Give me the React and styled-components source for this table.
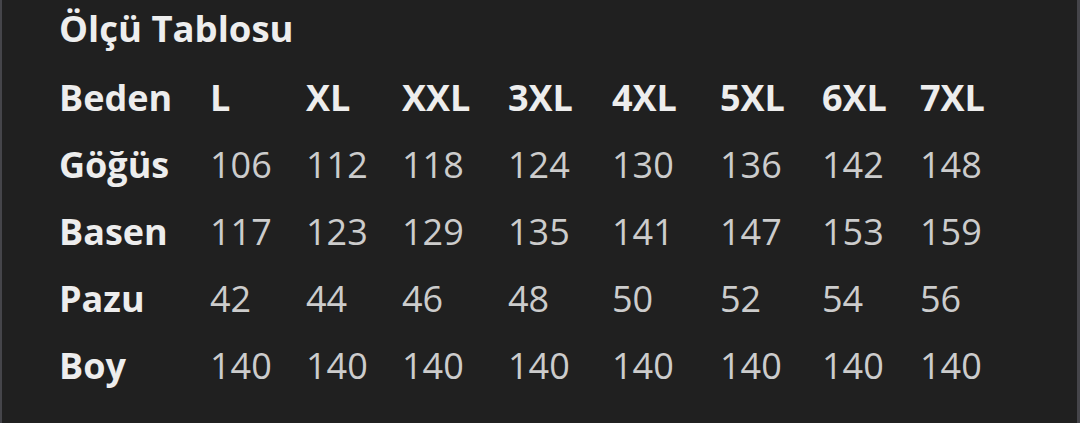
import styled, { createGlobalStyle } from "styled-components";

const GlobalStyle = createGlobalStyle`
  html, body {
    margin: 0;
    padding: 0;
    background: #202020;
  }
`;

const sizes = ["L", "XL", "XXL", "3XL", "4XL", "5XL", "6XL", "7XL"];

const rows = [
  { name: "Göğüs", values: [106, 112, 118, 124, 130, 136, 142, 148] },
  { name: "Basen", values: [117, 123, 129, 135, 141, 147, 153, 159] },
  { name: "Pazu", values: [42, 44, 46, 48, 50, 52, 54, 56] },
  { name: "Boy", values: [140, 140, 140, 140, 140, 140, 140, 140] },
];

const App = () => {
  return (
    <>
      <GlobalStyle />
      <Screen>
        <Title>Ölçü Tablosu</Title>
        <Table>
          <Label>Beden</Label>
          {sizes.map((s) => (
            <Size key={s}>{s}</Size>
          ))}
          {rows.map(({ name, values }) => (
            <Row key={name}>
              <Label>{name}</Label>
              {values.map((v, i) => (
                <Value key={i}>{v}</Value>
              ))}
            </Row>
          ))}
        </Table>
      </Screen>
    </>
  );
};

export default App;

const Screen = styled.main`
  box-sizing: border-box;
  height: 423px;
  padding: 6px 0 0 57px;
  background: #202020;
  border-left: 2px solid #45454a;
  border-right: 3px solid #45454a;
  font-family: "Open Sans", "Noto Sans", sans-serif;
  color: #ededed;
`;

const Title = styled.h1`
  margin: 0 0 14px;
  font-size: 36.5px;
  line-height: 44px;
  font-weight: 700;
  color: #eeeeee;
`;

const Table = styled.div`
  display: grid;
  grid-template-columns: 151px 96px 96px 106px 104px 108px 102px 98px auto;
  grid-auto-rows: 67px;
  font-size: 36px;
  line-height: 67px;
`;

const Row = styled.div`
  display: contents;
`;

const Label = styled.div`
  font-weight: 700;
  color: #ededed;
`;

const Size = styled.div`
  font-weight: 700;
  color: #ededed;
`;

const Value = styled.div`
  font-weight: 400;
  color: #cccccc;
`;
